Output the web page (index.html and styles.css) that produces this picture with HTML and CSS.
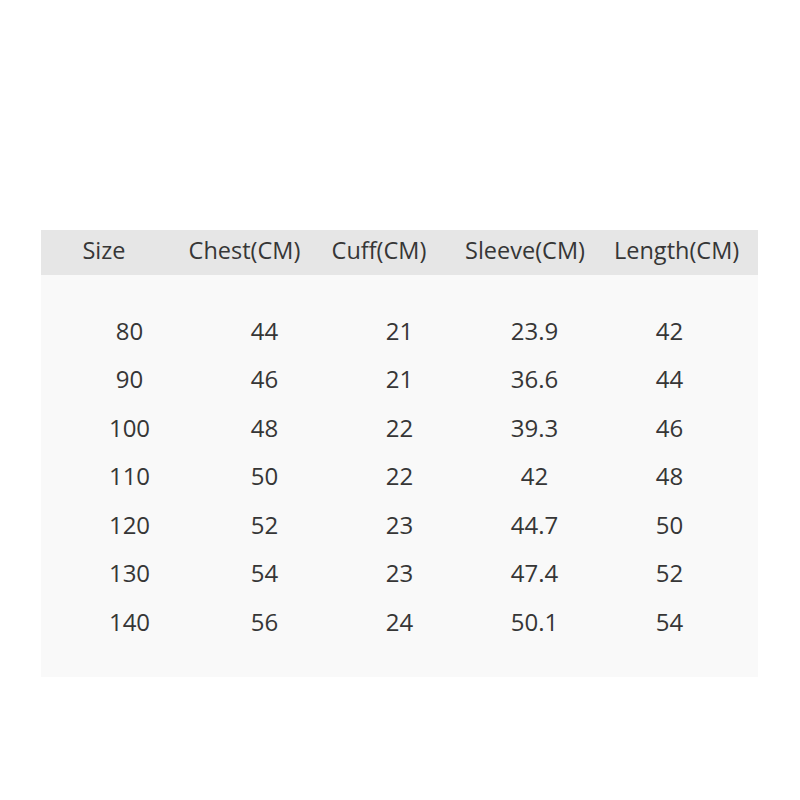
FILE: index.html
```html
<!DOCTYPE html>
<html>
<head>
<meta charset="utf-8">
<link rel="stylesheet" href="styles.css">
</head>
<body>
<div class="chart">
  <div class="head">
    <div>Size</div><div>Chest(CM)</div><div>Cuff(CM)</div><div>Sleeve(CM)</div><div>Length(CM)</div>
  </div>
  <div class="rows">
    <div class="row"><div>80</div><div>44</div><div>21</div><div>23.9</div><div>42</div></div>
    <div class="row"><div>90</div><div>46</div><div>21</div><div>36.6</div><div>44</div></div>
    <div class="row"><div>100</div><div>48</div><div>22</div><div>39.3</div><div>46</div></div>
    <div class="row"><div>110</div><div>50</div><div>22</div><div>42</div><div>48</div></div>
    <div class="row"><div>120</div><div>52</div><div>23</div><div>44.7</div><div>50</div></div>
    <div class="row"><div>130</div><div>54</div><div>23</div><div>47.4</div><div>52</div></div>
    <div class="row"><div>140</div><div>56</div><div>24</div><div>50.1</div><div>54</div></div>
  </div>
</div>
</body>
</html>
```
FILE: styles.css
```css
html, body {
  margin: 0;
  background: #ffffff;
}
body {
  font-family: "Open Sans", "Noto Sans", sans-serif;
  color: #363636;
}
.chart {
  margin: 230px 0 0 41px;
  width: 717px;
}
.head {
  display: grid;
  grid-template-columns: 126px 155px 114px 178px 118px;
  height: 45px;
  align-items: center;
  background: #e6e6e6;
  font-size: 23.5px;
  text-align: center;
  padding-bottom: 6px;
  box-sizing: border-box;
}
.rows {
  background: #f9f9f9;
  padding: 31px 0 31px 21px;
}
.row {
  display: grid;
  grid-template-columns: repeat(5, 135px);
  height: 48.5px;
  align-items: center;
  text-align: center;
  font-size: 24px;
}
```
